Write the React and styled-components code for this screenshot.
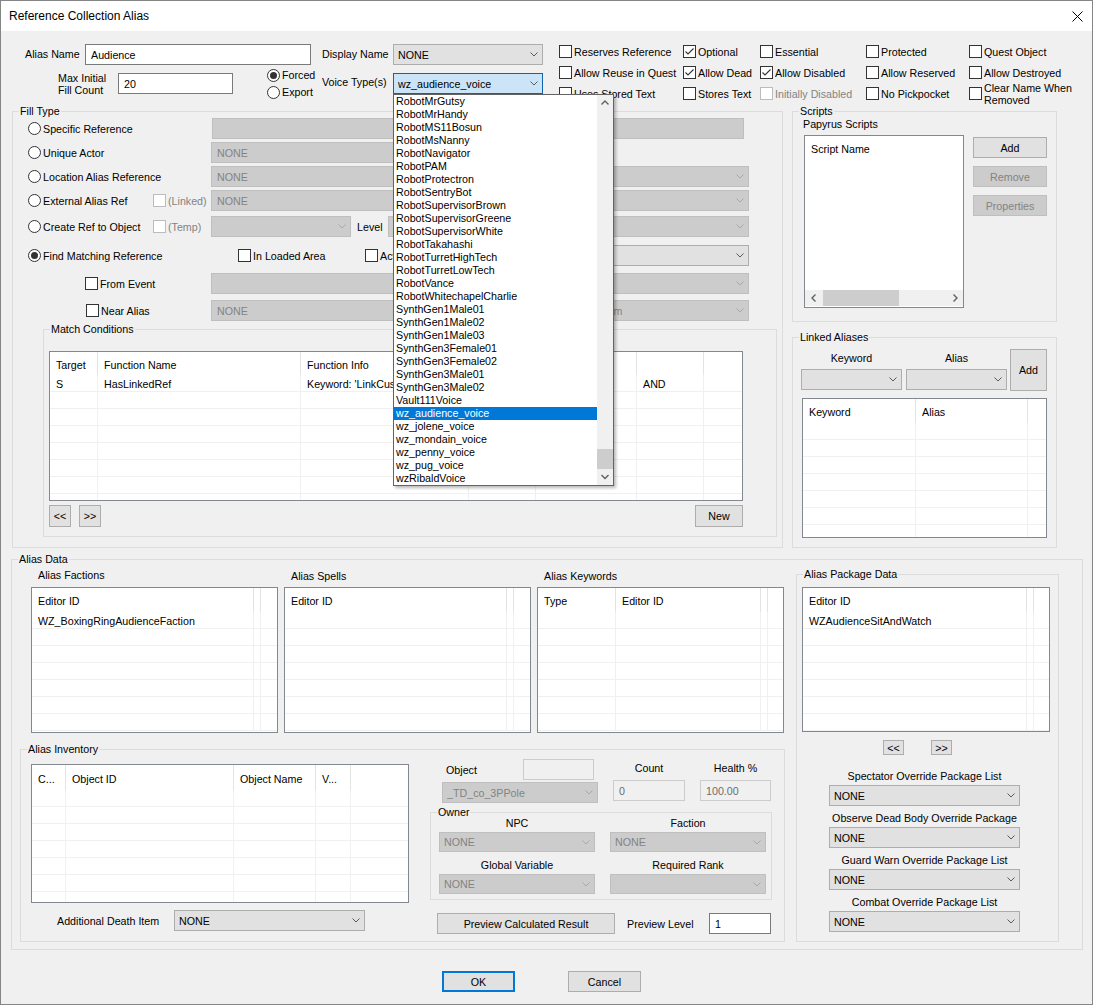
import React from "react";
import styled, { createGlobalStyle } from "styled-components";

const FONT = `"Liberation Sans", Arial, "DejaVu Sans", sans-serif`;
const px = (v, d = 0) => `${v ?? d}px`;

const GlobalStyle = createGlobalStyle`
  html, body { margin: 0; padding: 0; background: #ffffff; }
  body { font-family: ${FONT}; font-size: 10.7px; color: #000; }
  *, *::before, *::after { box-sizing: border-box; }
`;

/* ---------- window chrome ---------- */
const Window = styled.div`
  position: relative;
  width: 1093px;
  height: 1005px;
  border: 1px solid #858585;
  background: #f0f0f0;
  overflow: hidden;
`;

const TitleBar = styled.div`
  height: 30px;
  background: #ffffff;
  display: flex;
  align-items: center;
  padding-left: 8px;
`;

const TitleText = styled.span`
  font-size: 12px;
  line-height: 14px;
`;

const CloseGlyph = styled.span`
  margin-left: auto;
  margin-right: 9px;
  display: flex;
`;

/* ---------- primitives ---------- */
const Text = styled.span`
  flex: 0 0 auto;
  display: block;
  width: ${(p) => (p.$w ? `${p.$w}px` : "auto")};
  margin-left: ${(p) => px(p.$ml)};
  margin-top: ${(p) => px(p.$mt)};
  padding-top: ${(p) => px(p.$pt)};
  line-height: 12px;
  white-space: nowrap;
  text-align: ${(p) => (p.$center ? "center" : "left")};
  color: ${(p) => (p.$disabled ? "#838383" : "#000")};
`;

const EDIT_V = {
  normal: { bg: "#ffffff", bd: "#7a7a7a", fg: "#000" },
  readonly: { bg: "#f0f0f0", bd: "#cccccc", fg: "#6d6d6d" },
  disabled: { bg: "#cccccc", bd: "#bfbfbf", fg: "#838383" },
};

const EditBox = styled.div`
  flex: 0 0 auto;
  width: ${(p) => p.$w}px;
  height: ${(p) => p.$h || 21}px;
  margin-left: ${(p) => px(p.$ml)};
  margin-top: ${(p) => px(p.$mt)};
  padding-left: ${(p) => px(p.$pl, 5)};
  display: flex;
  align-items: center;
  background: ${(p) => EDIT_V[p.$v || "normal"].bg};
  border: 1px solid ${(p) => EDIT_V[p.$v || "normal"].bd};
  color: ${(p) => EDIT_V[p.$v || "normal"].fg};
  white-space: nowrap;
  overflow: hidden;
`;

const COMBO_V = {
  normal: { bg: "#e1e1e1", bd: "#adadad", fg: "#000", ch: "#5a5a5a" },
  focus: { bg: "#cce4f7", bd: "#0f63b0", fg: "#000", ch: "#5a5a5a" },
  disabled: { bg: "#cccccc", bd: "#bfbfbf", fg: "#838383", ch: "#a9a9a9" },
};

const ComboBox = styled.div`
  flex: 0 0 auto;
  width: ${(p) => p.$w}px;
  height: ${(p) => p.$h || 21}px;
  margin-left: ${(p) => px(p.$ml)};
  margin-top: ${(p) => px(p.$mt)};
  padding: 0 4px 0 ${(p) => px(p.$pl, 4)};
  display: flex;
  align-items: center;
  justify-content: space-between;
  background: ${(p) => COMBO_V[p.$v].bg};
  border: 1px solid ${(p) => COMBO_V[p.$v].bd};
  color: ${(p) => COMBO_V[p.$v].fg};
`;

const ComboValue = styled.span`
  overflow: hidden;
  white-space: nowrap;
`;

function Combo({ v = "normal", w, h, ml, mt, pl, children }) {
  const c = COMBO_V[v];
  return (
    <ComboBox $v={v} $w={w} $h={h} $ml={ml} $mt={mt} $pl={pl}>
      <ComboValue>{children}</ComboValue>
      <svg width="8" height="5" viewBox="0 0 8 5">
        <polyline points="0.5,0.5 4,4 7.5,0.5" fill="none" stroke={c.ch} strokeWidth="1" />
      </svg>
    </ComboBox>
  );
}

const Btn = styled.div`
  flex: 0 0 auto;
  width: ${(p) => p.$w}px;
  height: ${(p) => p.$h || 21}px;
  margin-left: ${(p) => (p.$mlAuto ? "auto" : px(p.$ml))};
  margin-top: ${(p) => px(p.$mt)};
  display: flex;
  align-items: center;
  justify-content: center;
  white-space: nowrap;
  background: ${(p) => (p.$disabled ? "#cccccc" : "#e1e1e1")};
  border: ${(p) =>
    p.$default ? "2px solid #0078d7" : `1px solid ${p.$disabled ? "#bfbfbf" : "#adadad"}`};
  color: ${(p) => (p.$disabled ? "#838383" : "#000")};
`;

/* checkbox / radio */
const ToggleItem = styled.div`
  flex: 0 0 auto;
  display: flex;
  align-items: center;
  gap: 2px;
  width: ${(p) => (p.$w ? `${p.$w}px` : "auto")};
  height: ${(p) => (p.$h ? `${p.$h}px` : "auto")};
  margin-left: ${(p) => px(p.$ml)};
  white-space: nowrap;
`;

const CheckSquare = styled.span`
  flex: 0 0 13px;
  width: 13px;
  height: 13px;
  border: 1px solid ${(p) => (p.$disabled ? "#bcbcbc" : "#333333")};
  background: #ffffff;
  display: flex;
  align-items: center;
  justify-content: center;
`;

const RadioCircle = styled.span`
  flex: 0 0 13px;
  width: 13px;
  height: 13px;
  border-radius: 50%;
  border: 1px solid #333333;
  background: #ffffff;
  display: flex;
  align-items: center;
  justify-content: center;
  &::after {
    content: "";
    display: ${(p) => (p.$on ? "block" : "none")};
    width: 7px;
    height: 7px;
    border-radius: 50%;
    background: #333333;
  }
`;

function Check({ label, checked, disabled, w, ml }) {
  return (
    <ToggleItem $w={w} $ml={ml}>
      <CheckSquare $disabled={disabled}>
        {checked && (
          <svg width="11" height="11" viewBox="0 0 11 11">
            <polyline points="1.5,5.5 4,8 9.5,2.5" fill="none" stroke="#333" strokeWidth="1.1" />
          </svg>
        )}
      </CheckSquare>
      <Text $disabled={disabled}>{label}</Text>
    </ToggleItem>
  );
}

function Radio({ label, on, w, h }) {
  return (
    <ToggleItem $w={w} $h={h}>
      <RadioCircle $on={on} />
      <Text>{label}</Text>
    </ToggleItem>
  );
}

/* group box */
const Group = styled.div`
  flex: 0 0 auto;
  width: ${(p) => p.$w}px;
  height: ${(p) => p.$h}px;
  margin-left: ${(p) => px(p.$ml)};
  margin-top: ${(p) => px(p.$mt)};
  border: 1px solid #dcdcdc;
  display: flex;
  flex-direction: column;
`;

const Legend = styled.div`
  align-self: flex-start;
  height: 13px;
  line-height: 13px;
  margin: -7px 0 0 6px;
  padding: 0 1px;
  background: #f0f0f0;
  white-space: nowrap;
`;

/* list view */
const LVFrame = styled.div`
  flex: 0 0 auto;
  width: ${(p) => p.$w}px;
  height: ${(p) => p.$h}px;
  margin-left: ${(p) => px(p.$ml)};
  margin-top: ${(p) => px(p.$mt)};
  border: 1px solid #828790;
  background: #ffffff;
  overflow: hidden;
  display: flex;
  flex-direction: column;
`;

const LVHead = styled.div`
  display: flex;
  flex: 0 0 ${(p) => p.$h}px;
`;

const LVHeadCell = styled.div`
  flex: ${(p) => (p.$w ? `0 0 ${p.$w}px` : "1 1 auto")};
  border-right: ${(p) => (p.$w ? "1px solid #e3e3e3" : "none")};
  padding: 2px 0 0 6px;
  display: flex;
  align-items: center;
  white-space: nowrap;
  overflow: hidden;
`;

const LVRow = styled.div`
  display: flex;
  flex: 0 0 17px;
  border-bottom: 1px solid #f0f0f0;
`;

const LVCell = styled.div`
  flex: ${(p) => (p.$w ? `0 0 ${p.$w}px` : "1 1 auto")};
  border-right: ${(p) => (p.$w ? "1px solid #f0f0f0" : "none")};
  padding: 2px 0 0 6px;
  line-height: 14px;
  white-space: nowrap;
  overflow: hidden;
`;

function ListView({ w, h, ml, mt, headH = 24, cols, rows = [], n = 8 }) {
  return (
    <LVFrame $w={w} $h={h} $ml={ml} $mt={mt}>
      <LVHead $h={headH}>
        {cols.map((c, i) => (
          <LVHeadCell key={i} $w={c.w}>
            {c.t}
          </LVHeadCell>
        ))}
        <LVHeadCell />
      </LVHead>
      {Array.from({ length: n }).map((_, r) => (
        <LVRow key={r}>
          {cols.map((c, i) => (
            <LVCell key={i} $w={c.w}>
              {(rows[r] && rows[r][i]) || ""}
            </LVCell>
          ))}
          <LVCell />
        </LVRow>
      ))}
    </LVFrame>
  );
}

/* ---------- top area ---------- */
const TopArea = styled.div`
  display: flex;
  height: 80px;
  padding-top: 13px;
`;

const TopLeft = styled.div`
  display: flex;
  flex-direction: column;
  width: 542px;
  flex: 0 0 542px;
`;

const TopRow = styled.div`
  display: flex;
  align-items: center;
  height: ${(p) => p.$h}px;
  margin-top: ${(p) => px(p.$mt)};
`;

const RadioStack = styled.div`
  flex: 0 0 55px;
  margin-left: ${(p) => px(p.$ml)};
  display: flex;
  flex-direction: column;
`;

const FlagGrid = styled.div`
  display: grid;
  grid-template-columns: 124px 77px 106px 103px 120px;
  grid-auto-rows: 21px;
  align-items: center;
  margin-left: 16px;
  margin-top: -3px;
  align-self: flex-start;
`;

/* ---------- middle ---------- */
const MiddleRow = styled.div`
  display: flex;
  margin-left: 11px;
  gap: 9px;
`;

const FillRow = styled.div`
  display: flex;
  align-items: center;
  height: 21px;
  flex: 0 0 21px;
  margin-top: ${(p) => px(p.$mt)};
  padding-left: ${(p) => px(p.$pl, 15)};
`;

const ButtonBar = styled.div`
  display: flex;
  align-items: center;
  margin: ${(p) => px(p.$mt)} ${(p) => px(p.$mr)} 0 ${(p) => px(p.$ml)};
`;

const RightCol = styled.div`
  display: flex;
  flex-direction: column;
`;

const ScriptsBody = styled.div`
  display: flex;
  align-items: flex-start;
  margin-top: 5px;
`;

const ButtonStack = styled.div`
  display: flex;
  flex-direction: column;
  gap: 8px;
  margin-left: 9px;
  margin-top: 2px;
`;

const HScroll = styled.div`
  margin-top: auto;
  margin-bottom: 1px;
  height: 16px;
  flex: 0 0 16px;
  background: #f0f0f0;
  display: flex;
  align-items: center;
`;

const ScrollArrow = styled.div`
  flex: 0 0 16px;
  width: 16px;
  height: 16px;
  display: flex;
  align-items: center;
  justify-content: center;
`;

const HThumb = styled.div`
  flex: 0 0 76px;
  height: 16px;
  margin-left: 2px;
  margin-right: auto;
  background: #cdcdcd;
`;

const LinkedTop = styled.div`
  display: flex;
  align-items: flex-start;
  margin: 5px 0 0 8px;
`;

const LabeledColumn = styled.div`
  flex: 0 0 auto;
  width: ${(p) => p.$w}px;
  margin-left: ${(p) => px(p.$ml)};
  margin-top: ${(p) => px(p.$mt)};
  display: flex;
  flex-direction: column;
`;

/* ---------- alias data ---------- */
const DataBody = styled.div`
  display: flex;
  align-items: flex-start;
`;

const DataLeft = styled.div`
  flex: 0 0 773px;
  display: flex;
  flex-direction: column;
`;

const ListsRow = styled.div`
  display: flex;
  gap: 6px;
  margin: 3px 0 0 19px;
`;

const InvBody = styled.div`
  display: flex;
  align-items: flex-start;
  padding-left: 10px;
`;

const FieldsRow = styled.div`
  display: flex;
  align-items: flex-start;
  padding-left: 12px;
`;

const ObjectTop = styled.div`
  display: flex;
  align-items: center;
  height: 21px;
`;

const OwnerGrid = styled.div`
  display: grid;
  grid-template-columns: 156px 156px;
  column-gap: 15px;
  margin-top: -2px;
  padding-left: 8px;
`;

const InlineRow = styled.div`
  display: flex;
  align-items: center;
  flex: 0 0 auto;
  height: ${(p) => p.$h || 21}px;
  margin-top: ${(p) => px(p.$mt)};
  margin-left: ${(p) => px(p.$ml)};
`;

/* ---------- dropdown overlay ---------- */
const DropList = styled.div`
  position: absolute;
  left: 392px;
  top: 93px;
  width: 221px;
  height: 392px;
  border: 1px solid #646464;
  background: #ffffff;
  box-shadow: 2px 2px 3px rgba(0, 0, 0, 0.28);
  display: flex;
  z-index: 10;
`;

const DropItems = styled.div`
  flex: 1 1 auto;
  display: flex;
  flex-direction: column;
  overflow: hidden;
`;

const DropItem = styled.div`
  flex: 0 0 13px;
  height: 13px;
  line-height: 13px;
  padding-left: 2px;
  white-space: nowrap;
  background: ${(p) => (p.$sel ? "#0078d7" : "transparent")};
  color: ${(p) => (p.$sel ? "#ffffff" : "#000")};
`;

const VScroll = styled.div`
  flex: 0 0 16px;
  background: #f0f0f0;
  display: flex;
  flex-direction: column;
`;

const VTrack = styled.div`
  flex: 1 1 auto;
  display: flex;
  flex-direction: column;
  justify-content: flex-end;
`;

const VThumb = styled.div`
  height: 20px;
  background: #cdcdcd;
`;

const ArrowIcon = ({ dir }) => {
  const pts = {
    up: "0.5,4.5 4,1 7.5,4.5",
    down: "0.5,1 4,4.5 7.5,1",
    left: "4.5,0.5 1,4 4.5,7.5",
    right: "0.5,0.5 4,4 0.5,7.5",
  }[dir];
  const vert = dir === "up" || dir === "down";
  return (
    <svg width={vert ? 8 : 5} height={vert ? 5.5 : 8} viewBox={vert ? "0 0 8 5.5" : "0 0 5 8"}>
      <polyline points={pts} fill="none" stroke="#606060" strokeWidth="1.4" />
    </svg>
  );
};

/* ---------- data ---------- */
const VOICES = [
  "RobotMrGutsy", "RobotMrHandy", "RobotMS11Bosun", "RobotMsNanny", "RobotNavigator",
  "RobotPAM", "RobotProtectron", "RobotSentryBot", "RobotSupervisorBrown",
  "RobotSupervisorGreene", "RobotSupervisorWhite", "RobotTakahashi", "RobotTurretHighTech",
  "RobotTurretLowTech", "RobotVance", "RobotWhitechapelCharlie", "SynthGen1Male01",
  "SynthGen1Male02", "SynthGen1Male03", "SynthGen3Female01", "SynthGen3Female02",
  "SynthGen3Male01", "SynthGen3Male02", "Vault111Voice", "wz_audience_voice",
  "wz_jolene_voice", "wz_mondain_voice", "wz_penny_voice", "wz_pug_voice", "wzRibaldVoice",
];

const FLAGS = [
  { l: "Reserves Reference" }, { l: "Optional", c: true }, { l: "Essential" }, { l: "Protected" }, { l: "Quest Object" },
  { l: "Allow Reuse in Quest" }, { l: "Allow Dead", c: true }, { l: "Allow Disabled", c: true }, { l: "Allow Reserved" }, { l: "Allow Destroyed" },
  { l: "Uses Stored Text" }, { l: "Stores Text" }, { l: "Initially Disabled", d: true }, { l: "No Pickpocket" },
  { l: <>Clear Name When<br />Removed</> },
];

const PACKAGE_LISTS = [
  "Spectator Override Package List",
  "Observe Dead Body Override Package",
  "Guard Warn Override Package List",
  "Combat Override Package List",
];

export default function App() {
  return (
    <>
      <GlobalStyle />
      <Window>
        <TitleBar>
          <TitleText>Reference Collection Alias</TitleText>
          <CloseGlyph>
            <svg width="11" height="11" viewBox="0 0 11 11">
              <path d="M0.5 0.5 L10.5 10.5 M10.5 0.5 L0.5 10.5" stroke="#000" strokeWidth="1" />
            </svg>
          </CloseGlyph>
        </TitleBar>

        <TopArea>
          <TopLeft>
            <TopRow $h={21}>
              <Text $w={60} $ml={24} $mt={-2}>Alias Name</Text>
              <EditBox $w={226}>Audience</EditBox>
              <Text $w={71} $ml={11} $mt={-2}>Display Name</Text>
              <Combo w={150}>NONE</Combo>
            </TopRow>
            <TopRow $h={33} $mt={2}>
              <Text $w={60} $ml={57}>
                Max Initial
                <br />
                Fill Count
              </Text>
              <EditBox $w={115}>20</EditBox>
              <RadioStack $ml={34}>
                <Radio on h={17} label="Forced" />
                <Radio h={17} label="Export" />
              </RadioStack>
              <Text $w={71} $mt={-3}>Voice Type(s)</Text>
              <Combo w={150} v="focus">wz_audience_voice</Combo>
            </TopRow>
          </TopLeft>
          <FlagGrid>
            {FLAGS.map((f, i) => (
              <Check key={i} label={f.l} checked={f.c} disabled={f.d} />
            ))}
          </FlagGrid>
        </TopArea>

        <MiddleRow>
          <Group $w={771} $h={437}>
            <Legend>Fill Type</Legend>
            <FillRow>
              <Radio w={184} label="Specific Reference" />
              <EditBox $w={532} $v="disabled" />
            </FillRow>
            <FillRow $mt={3}>
              <Radio w={183} label="Unique Actor" />
              <Combo v="disabled" w={330} pl={5}>NONE</Combo>
            </FillRow>
            <FillRow $mt={3}>
              <Radio w={183} label="Location Alias Reference" />
              <Combo v="disabled" w={538} pl={5}>NONE</Combo>
            </FillRow>
            <FillRow $mt={3}>
              <Radio w={125} label="External Alias Ref" />
              <Check w={58} disabled label="(Linked)" />
              <Combo v="disabled" w={538} pl={5}>NONE</Combo>
            </FillRow>
            <FillRow $mt={5}>
              <Radio w={125} label="Create Ref to Object" />
              <Check w={58} disabled label="(Temp)" />
              <Combo v="disabled" w={140} />
              <Text $w={31} $ml={6}>Level</Text>
              <Combo v="disabled" w={361} />
            </FillRow>
            <FillRow $mt={8}>
              <Radio on w={210} label="Find Matching Reference" />
              <Check w={127} label="In Loaded Area" />
              <Check w={105} label="Actors Only" />
              <Combo w={279} />
            </FillRow>
            <FillRow $mt={7} $pl={72}>
              <Check w={126} label="From Event" />
              <Combo v="disabled" w={538} />
            </FillRow>
            <FillRow $mt={6} $pl={73}>
              <Check w={125} label="Near Alias" />
              <Combo v="disabled" w={359} pl={5}>NONE</Combo>
              <Combo v="disabled" w={172} ml={7}>Random</Combo>
            </FillRow>

            <Group $w={734} $h={208} $mt={8} $ml={30}>
              <Legend>Match Conditions</Legend>
              <ListView
                w={694}
                h={150}
                ml={5}
                mt={15}
                headH={23}
                n={8}
                cols={[
                  { t: "Target", w: 48 },
                  { t: "Function Name", w: 203 },
                  { t: "Function Info", w: 168 },
                  { t: "", w: 67 },
                  { t: "", w: 101 },
                  { t: "", w: 67 },
                ]}
                rows={[["S", "HasLinkedRef", "Keyword: 'LinkCustom01'", "", "", "AND"]]}
              />
              <ButtonBar $mt={4} $ml={5} $mr={33}>
                <Btn $w={22} $h={22}>&lt;&lt;</Btn>
                <Btn $w={22} $h={22} $ml={8}>&gt;&gt;</Btn>
                <Btn $w={48} $h={22} $mlAuto>New</Btn>
              </ButtonBar>
            </Group>
          </Group>

          <RightCol>
            <Group $w={265} $h={211}>
              <Legend>Scripts</Legend>
              <Text $ml={10}>Papyrus Scripts</Text>
              <ScriptsBody>
                <LVFrame $w={160} $h={173} $ml={11}>
                  <LVHead $h={24}>
                    <LVHeadCell>Script Name</LVHeadCell>
                  </LVHead>
                  <HScroll>
                    <ScrollArrow>
                      <ArrowIcon dir="left" />
                    </ScrollArrow>
                    <HThumb />
                    <ScrollArrow>
                      <ArrowIcon dir="right" />
                    </ScrollArrow>
                  </HScroll>
                </LVFrame>
                <ButtonStack>
                  <Btn $w={74}>Add</Btn>
                  <Btn $w={74} $disabled>Remove</Btn>
                  <Btn $w={74} $disabled>Properties</Btn>
                </ButtonStack>
              </ScriptsBody>
            </Group>

            <Group $w={265} $h={211} $mt={15}>
              <Legend>Linked Aliases</Legend>
              <LinkedTop>
                <LabeledColumn $w={101}>
                  <Text $center $pt={3}>Keyword</Text>
                  <Combo w={101} mt={5} />
                </LabeledColumn>
                <LabeledColumn $w={101} $ml={4}>
                  <Text $center $pt={3}>Alias</Text>
                  <Combo w={101} mt={5} />
                </LabeledColumn>
                <Btn $w={37} $h={42} $ml={3}>Add</Btn>
              </LinkedTop>
              <ListView
                w={245}
                h={140}
                ml={9}
                mt={7}
                n={8}
                cols={[
                  { t: "Keyword", w: 113 },
                  { t: "Alias", w: 112 },
                ]}
              />
            </Group>
          </RightCol>
        </MiddleRow>

        <Group $w={1072} $h={391} $ml={10} $mt={11}>
          <Legend>Alias Data</Legend>
          <DataBody>
            <DataLeft>
              <ListsRow>
                <LabeledColumn $w={247}>
                  <Text $ml={7}>Alias Factions</Text>
                  <ListView
                    w={247}
                    h={146}
                    mt={6}
                    n={7}
                    cols={[{ t: "Editor ID", w: 222 }, { t: "", w: 4 }]}
                    rows={[["WZ_BoxingRingAudienceFaction"]]}
                  />
                </LabeledColumn>
                <LabeledColumn $w={247}>
                  <Text $ml={7} $pt={1}>Alias Spells</Text>
                  <ListView w={247} h={146} mt={5} n={7} cols={[{ t: "Editor ID", w: 222 }, { t: "", w: 4 }]} />
                </LabeledColumn>
                <LabeledColumn $w={247}>
                  <Text $ml={7} $pt={1}>Alias Keywords</Text>
                  <ListView
                    w={247}
                    h={146}
                    mt={5}
                    n={7}
                    cols={[{ t: "Type", w: 78 }, { t: "Editor ID", w: 145 }, { t: "", w: 4 }]}
                  />
                </LabeledColumn>
              </ListsRow>

              <Group $w={765} $h={193} $ml={8} $mt={16}>
                <Legend>Alias Inventory</Legend>
                <InvBody>
                  <LabeledColumn $w={378} $mt={8}>
                    <ListView
                      w={378}
                      h={139}
                      headH={25}
                      n={7}
                      cols={[
                        { t: "C...", w: 34 },
                        { t: "Object ID", w: 168 },
                        { t: "Object Name", w: 82 },
                        { t: "V...", w: 35 },
                      ]}
                    />
                    <InlineRow $mt={7}>
                      <Text $w={117} $ml={26}>Additional Death Item</Text>
                      <Combo w={191}>NONE</Combo>
                    </InlineRow>
                  </LabeledColumn>

                  <LabeledColumn $w={342} $ml={21} $mt={3}>
                    <FieldsRow>
                      <LabeledColumn $w={156}>
                        <ObjectTop>
                          <Text $ml={4}>Object</Text>
                          <EditBox $w={71} $v="readonly" $ml={46} />
                        </ObjectTop>
                        <Combo v="disabled" w={156} mt={2}>_TD_co_3PPole</Combo>
                      </LabeledColumn>
                      <LabeledColumn $w={72} $ml={15}>
                        <Text $center $pt={3}>Count</Text>
                        <EditBox $w={72} $v="readonly" $mt={6}>0</EditBox>
                      </LabeledColumn>
                      <LabeledColumn $w={71} $ml={15}>
                        <Text $center $pt={3}>Health %</Text>
                        <EditBox $w={71} $v="readonly" $mt={6}>100.00</EditBox>
                      </LabeledColumn>
                    </FieldsRow>

                    <Group $w={342} $h={88} $mt={9}>
                      <Legend>Owner</Legend>
                      <OwnerGrid>
                        <LabeledColumn $w={156}>
                          <Text $center>NPC</Text>
                          <Combo v="disabled" w={156} h={20} mt={3}>NONE</Combo>
                        </LabeledColumn>
                        <LabeledColumn $w={156}>
                          <Text $center>Faction</Text>
                          <Combo v="disabled" w={156} h={20} mt={3}>NONE</Combo>
                        </LabeledColumn>
                        <LabeledColumn $w={156} $mt={7}>
                          <Text $center>Global Variable</Text>
                          <Combo v="disabled" w={156} h={20} mt={3}>NONE</Combo>
                        </LabeledColumn>
                        <LabeledColumn $w={156} $mt={7}>
                          <Text $center>Required Rank</Text>
                          <Combo v="disabled" w={156} h={20} mt={3} />
                        </LabeledColumn>
                      </OwnerGrid>
                    </Group>

                    <InlineRow $mt={13}>
                      <Btn $w={178} $ml={7}>Preview Calculated Result</Btn>
                      <Text $w={82} $ml={12}>Preview Level</Text>
                      <EditBox $w={62}>1</EditBox>
                    </InlineRow>
                  </LabeledColumn>
                </InvBody>
              </Group>
            </DataLeft>

            <Group $w={263} $h={368} $ml={11} $mt={8}>
              <Legend>Alias Package Data</Legend>
              <ListView
                w={248}
                h={145}
                ml={5}
                mt={6}
                n={7}
                cols={[{ t: "Editor ID", w: 224 }, { t: "", w: 4 }]}
                rows={[["WZAudienceSitAndWatch"]]}
              />
              <InlineRow $h={15} $mt={8}>
                <Btn $w={21} $h={15} $ml={86}>&lt;&lt;</Btn>
                <Btn $w={21} $h={15} $ml={27}>&gt;&gt;</Btn>
              </InlineRow>
              {PACKAGE_LISTS.map((t, i) => (
                <LabeledColumn key={t} $w={191} $ml={32} $mt={i === 0 ? 15 : 6}>
                  <Text $center>{t}</Text>
                  <Combo w={191} mt={3}>NONE</Combo>
                </LabeledColumn>
              ))}
            </Group>
          </DataBody>
        </Group>

        <InlineRow $mt={21} $ml={441}>
          <Btn $w={73} $default>OK</Btn>
          <Btn $w={73} $ml={53}>Cancel</Btn>
        </InlineRow>

        <DropList>
          <DropItems>
            {VOICES.map((v) => (
              <DropItem key={v} $sel={v === "wz_audience_voice"}>
                {v}
              </DropItem>
            ))}
          </DropItems>
          <VScroll>
            <ScrollArrow>
              <ArrowIcon dir="up" />
            </ScrollArrow>
            <VTrack>
              <VThumb />
            </VTrack>
            <ScrollArrow>
              <ArrowIcon dir="down" />
            </ScrollArrow>
          </VScroll>
        </DropList>
      </Window>
    </>
  );
}
